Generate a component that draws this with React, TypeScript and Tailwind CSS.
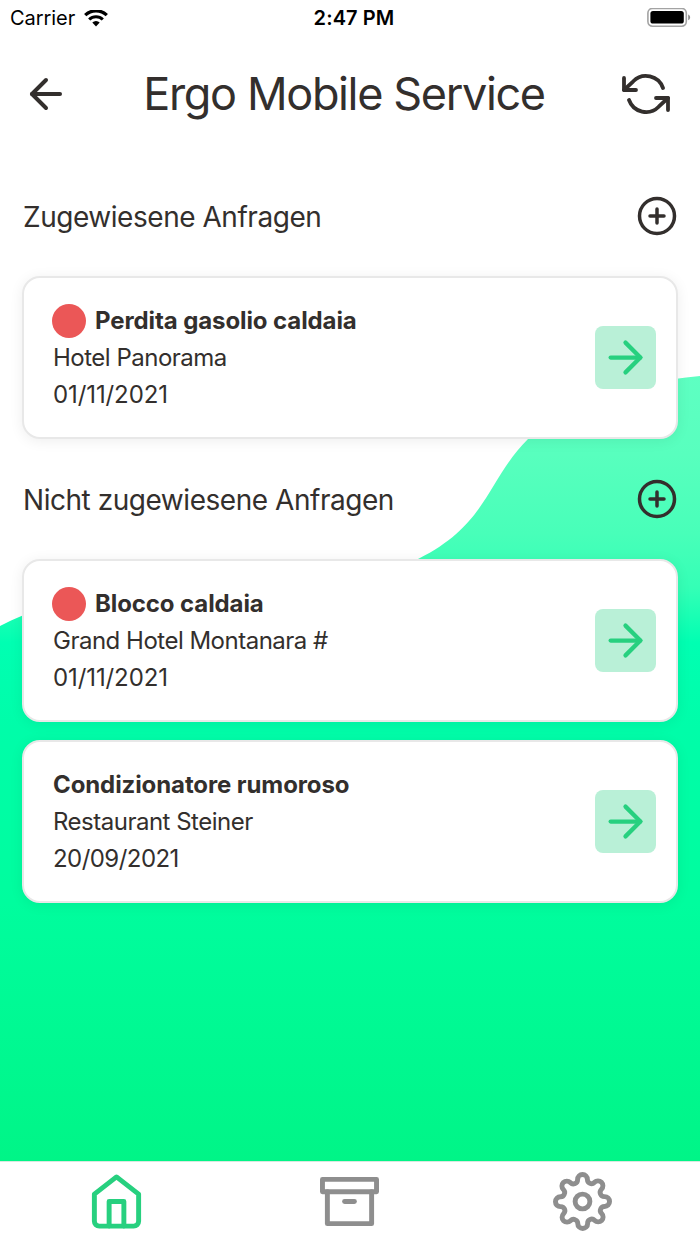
import type { IconType } from 'react-icons';
import {
  FiArchive,
  FiArrowLeft,
  FiArrowRight,
  FiHome,
  FiPlusCircle,
  FiSettings
} from 'react-icons/fi';

interface ServiceRequest {
  id: number;
  title: string;
  customer: string;
  date: string;
  dateClass: string;
  urgent: boolean;
}

const assignedRequests: ServiceRequest[] = [
  { id: 1, title: 'Perdita gasolio caldaia', customer: 'Hotel Panorama', date: '01/11/2021', dateClass: 'tracking-[-0.1px]', urgent: true },
];

const unassignedRequests: ServiceRequest[] = [
  { id: 2, title: 'Blocco caldaia', customer: 'Grand Hotel Montanara #', date: '01/11/2021', dateClass: 'tracking-[-0.1px]', urgent: true },
  { id: 3, title: 'Condizionatore rumoroso', customer: 'Restaurant Steiner', date: '20/09/2021', dateClass: 'tracking-[-0.55px]', urgent: false },
];

const tabs: { name: string; icon: IconType; active: boolean }[] = [
  { name: 'home', icon: FiHome, active: true },
  { name: 'archive', icon: FiArchive, active: false },
  { name: 'settings', icon: FiSettings, active: false },
];

const Background = () => (
  <svg className="absolute inset-0 w-full h-full" viewBox="0 0 700 1244" preserveAspectRatio="none">
    <defs>
      <linearGradient id="wave" gradientUnits="userSpaceOnUse" x1="0" y1="376" x2="0" y2="1161">
        <stop offset="0" stopColor="#5effc2" />
        <stop offset="0.1" stopColor="#58ffbe" />
        <stop offset="0.2" stopColor="#48ffb9" />
        <stop offset="0.27" stopColor="#34ffb6" />
        <stop offset="0.34" stopColor="#00ffb2" />
        <stop offset="0.45" stopColor="#00fda9" />
        <stop offset="0.67" stopColor="#00fd9e" />
        <stop offset="1" stopColor="#00f587" />
      </linearGradient>
    </defs>
    <path
      d="M0 626C60 595 110 592 200 592C300 592 370 585 419 558.5C488 524 487 480 528 439C570 398 625 384 700 376V1161H0Z"
      fill="url(#wave)"
    />
  </svg>
);

const RefreshIcon = ({ className }: { className?: string }) => (
  <svg
    className={className}
    viewBox="0 0 24 24"
    fill="none"
    stroke="currentColor"
    strokeWidth="1.9"
    strokeLinecap="round"
    strokeLinejoin="round"
  >
    <path d="M1 4v6h6M23 20v-6h-6" />
    <path d="M20.49 9A9 9 0 0 0 5.64 5.64L1 10m22 4l-4.64 4.36A9 9 0 0 1 3.51 15" />
  </svg>
);

const StatusBar = () => (
  <div className="grid grid-cols-3 items-center h-9 pl-[10px] pr-[9px] text-black">
    <div className="flex items-center gap-[9px]">
      <span className="text-[20px] leading-9 tracking-[-0.05px]">Carrier</span>
      <svg className="w-6 h-[17px]" viewBox="0 0 24 17" fill="none" stroke="currentColor">
        <path d="M1.2 5.2a15.4 15.4 0 0 1 21.6 0" strokeWidth="3.2" />
        <path d="M5.2 9.5a9.7 9.7 0 0 1 13.6 0" strokeWidth="3.1" />
        <path d="M12 16.4l-3.7-3.8a5.3 5.3 0 0 1 7.4 0z" fill="currentColor" stroke="none" />
      </svg>
    </div>
    <span className="text-center text-[20px] leading-9 font-semibold tracking-[0.1px] pl-[7px]">2:47 PM</span>
    <svg className="w-11 h-5 justify-self-end" viewBox="0 0 44 20">
      <rect x="0.9" y="0.4" width="38.4" height="17.8" rx="4.6" fill="none" stroke="#a3a3a3" strokeWidth="1.6" />
      <rect x="3.4" y="3" width="33.4" height="12.6" rx="2.6" fill="#000" />
      <path d="M41.2 6.5c2.6 1 2.6 4.8 0 5.8z" fill="#8c8c8c" />
    </svg>
  </div>
);

const SectionHeader = ({ title }: { title: string }) => (
  <div className="flex items-center justify-between h-[42px] pl-[23px] pr-[22.5px]">
    <h2 className="pt-[2px] text-[28px] leading-none tracking-[-0.46px]">{title}</h2>
    <button aria-label="+">
      <FiPlusCircle className="size-[42px]" />
    </button>
  </div>
);

const RequestCard = ({ request }: { request: ServiceRequest }) => (
  <div className="flex items-center justify-between h-[163px] mx-[22px] pl-[29px] pr-5 bg-white border-2 border-[#e8e8e8] rounded-[18px] shadow-[0_2px_14px_rgba(0,0,0,0.07)]">
    <div className="text-[24px] leading-[37px]">
      <div className="flex items-center gap-[9px]">
        {request.urgent && <span className="size-[34px] -ml-px rounded-full bg-[#eb5757]" />}
        <h3 className="font-bold tracking-[-0.1px]">{request.title}</h3>
      </div>
      <p className="tracking-[-0.5px]">{request.customer}</p>
      <p className={request.dateClass}>{request.date}</p>
    </div>
    <button className="flex items-center justify-center w-[61px] h-[63px] rounded-lg bg-[#b9f0d7] text-[#27d07f]">
      <FiArrowRight className="size-[51px]" />
    </button>
  </div>
);

const App = () => {
  return (
    <div className="relative w-[700px] h-[1244px] overflow-hidden bg-white text-[#332f2d] font-[Inter,sans-serif]">
      <Background />

      <div className="relative flex flex-col h-full">
        <StatusBar />

        {/* Header */}
        <header className="flex items-center justify-between h-[115px] pl-[22px] pr-[30px]">
          <FiArrowLeft className="size-12" />
          <h1 className="text-[45px] leading-none tracking-[-1.36px] pr-1">Ergo Mobile Service</h1>
          <RefreshIcon className="size-12" />
        </header>

        {/* Requests */}
        <main className="flex-1 pt-11">
          <SectionHeader title="Zugewiesene Anfragen" />
          <div className="my-[39px]">
            {assignedRequests.map((request) => (
              <RequestCard key={request.id} request={request} />
            ))}
          </div>

          <SectionHeader title="Nicht zugewiesene Anfragen" />
          <div className="flex flex-col gap-[18px] mt-[39px]">
            {unassignedRequests.map((request) => (
              <RequestCard key={request.id} request={request} />
            ))}
          </div>
        </main>

        {/* Tab bar */}
        <nav className="grid grid-cols-3 h-[83px] pb-[3px] pr-px bg-white border-t border-[#d8e8e0]">
          {tabs.map(({ name, icon: Icon, active }) => (
            <button
              key={name}
              className={`flex items-center justify-center ${active ? 'text-[#27d07f]' : 'text-[#8e8e8e]'}`}
            >
              <Icon className="size-[59px]" />
            </button>
          ))}
        </nav>
      </div>
    </div>
  );
};

export default App;
